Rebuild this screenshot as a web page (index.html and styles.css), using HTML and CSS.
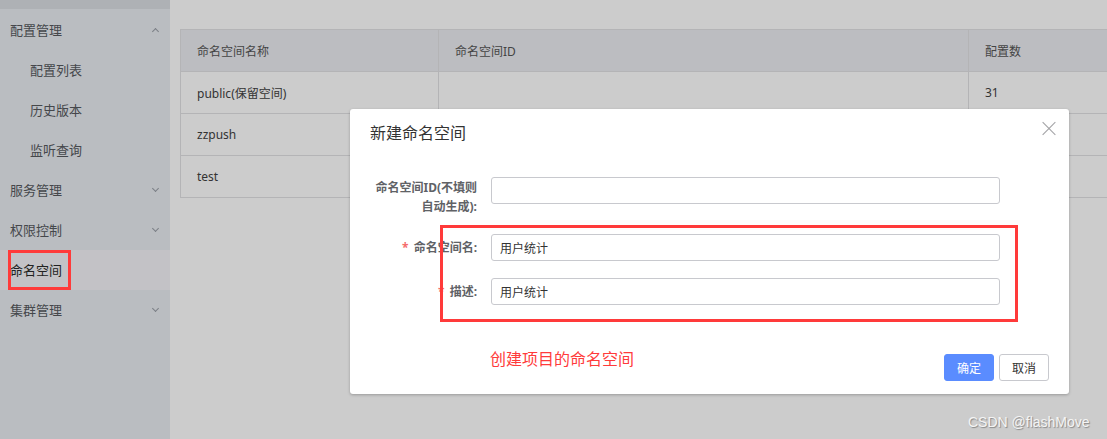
FILE: index.html
```html
<!DOCTYPE html>
<html lang="zh-CN">
<head>
  <meta charset="UTF-8" />
  <title>命名空间</title>
  <link rel="stylesheet" href="styles.css">
</head>
<body>

<div class="layout">
  <aside class="sidebar">
    <div class="sidebar-top"></div>
    <ul class="menu">
      <li class="menu-item">配置管理<span class="arrow up"></span></li>
      <li class="menu-item sub">配置列表</li>
      <li class="menu-item sub">历史版本</li>
      <li class="menu-item sub">监听查询</li>
      <li class="menu-item">服务管理<span class="arrow"></span></li>
      <li class="menu-item">权限控制<span class="arrow"></span></li>
      <li class="menu-item active">命名空间</li>
      <li class="menu-item">集群管理<span class="arrow"></span></li>
    </ul>
    <div class="mark mark-menu"></div>
  </aside>

  <main class="content">
    <table class="grid">
      <thead>
        <tr>
          <th class="col-name">命名空间名称</th>
          <th class="col-id">命名空间ID</th>
          <th class="col-count">配置数</th>
        </tr>
      </thead>
      <tbody>
        <tr><td>public(保留空间)</td><td></td><td>31</td></tr>
        <tr><td>zzpush</td><td></td><td></td></tr>
        <tr><td>test</td><td></td><td></td></tr>
      </tbody>
    </table>
  </main>
</div>

<div class="dialog">
  <div class="dialog-header">
    <span class="dialog-title">新建命名空间</span>
    <span class="dialog-close"></span>
  </div>
  <div class="dialog-body">
    <div class="form-row tall">
      <label class="form-label">命名空间ID(不填则<br>自动生成):</label>
      <input class="form-input" type="text" />
    </div>
    <div class="form-row">
      <label class="form-label"><span class="req">*</span>命名空间名:</label>
      <input class="form-input" type="text" value="用户统计" />
    </div>
    <div class="form-row">
      <label class="form-label"><span class="req">*</span>描述:</label>
      <input class="form-input" type="text" value="用户统计" />
    </div>
  </div>
  <div class="dialog-footer">
    <span class="note">创建项目的命名空间</span>
    <button class="btn btn-primary">确定</button>
    <button class="btn">取消</button>
  </div>
</div>

<div class="mark mark-form"></div>

<div class="watermark">CSDN @flashMove</div>

</body>
</html>
```

FILE: styles.css
```css
* {
  box-sizing: border-box;
}

body {
  margin: 0;
  font-family: "Noto Sans", "Noto Sans CJK SC", sans-serif;
  background: #cccccc;
  color: #333;
  overflow: hidden;
  height: 439px;
}

.layout {
  display: flex;
  height: 439px;
}

.sidebar {
  width: 170px;
  flex-shrink: 0;
  background: #babdc1;
  position: relative;
}

.sidebar-top {
  height: 9px;
  background: #aeb1b5;
}

.menu {
  list-style: none;
  margin: 0;
  padding: 1px 0 0;
}

.menu-item {
  height: 40px;
  line-height: 40px;
  padding-left: 10px;
  font-size: 13px;
  color: #45474b;
  position: relative;
}

.menu-item.sub {
  padding-left: 30px;
}

.menu-item.active {
  background: #c3c2c6;
  color: #222;
}

.arrow {
  position: absolute;
  right: 12px;
  top: 16px;
  width: 5px;
  height: 5px;
  border-right: 1px solid #7b7f86;
  border-bottom: 1px solid #7b7f86;
  transform: rotate(45deg);
}

.arrow.up {
  top: 19px;
  transform: rotate(-135deg);
}

.content {
  flex: 1;
  padding: 29px 0 0 10px;
  overflow: hidden;
}

.grid {
  border-collapse: collapse;
  width: 1000px;
  font-size: 12px;
  color: #333;
}

.grid th,
.grid td {
  height: 42px;
  padding: 0 16px;
  text-align: left;
  font-weight: normal;
  border: 1px solid #b4b4b6;
}

.grid th {
  background: #bcbdc1;
  color: #444;
}

.col-name {
  width: 258px;
}

.col-id {
  width: 530px;
}

.dialog {
  position: absolute;
  left: 350px;
  top: 109px;
  width: 719px;
  height: 285px;
  background: #fff;
  border-radius: 3px;
  box-shadow: 0 1px 3px rgba(0, 0, 0, 0.25);
}

.dialog-header {
  height: 48px;
  padding: 13px 20px 0;
  position: relative;
}

.dialog-title {
  font-size: 16px;
  line-height: 22px;
  color: #333;
}

.dialog-close {
  position: absolute;
  right: 13px;
  top: 13px;
  width: 14px;
  height: 14px;
}

.dialog-close::before,
.dialog-close::after {
  content: "";
  position: absolute;
  left: -2px;
  top: 6px;
  width: 18px;
  height: 1px;
  background: #a0a0a4;
  transform: rotate(45deg);
}

.dialog-close::after {
  transform: rotate(-45deg);
}

.dialog-body {
  padding-top: 20px;
}

.form-row {
  display: flex;
  align-items: center;
  margin-bottom: 17px;
}

.form-row.tall {
  align-items: flex-start;
  height: 40px;
}

.form-label {
  width: 141px;
  padding-right: 14px;
  text-align: right;
  font-size: 12px;
  font-weight: bold;
  color: #606266;
  line-height: 19px;
}

.tall .form-label {
  padding-top: 1px;
}

.req {
  color: #f56c6c;
  margin-right: 5px;
}

.form-input {
  width: 509px;
  height: 27px;
  border: 1px solid #c8c9ce;
  border-radius: 3px;
  padding: 0 8px;
  font-family: inherit;
  font-size: 12px;
  color: #333;
  outline: none;
}

.dialog-footer {
  display: flex;
  align-items: center;
  padding: 32px 20px 0 140px;
}

.note {
  flex: 1;
  font-size: 16px;
  color: #ff3b3b;
  margin-top: -20px;
}

.btn {
  width: 50px;
  height: 27px;
  margin-left: 5px;
  border: 1px solid #c8c9ce;
  border-radius: 3px;
  background: #fff;
  font-family: inherit;
  font-size: 12px;
  color: #333;
  padding: 0;
}

.btn-primary {
  background: #5a8cff;
  border-color: #5a8cff;
  color: #fff;
}

.mark {
  position: absolute;
  border: 3px solid #ff3a3a;
}

.mark-menu {
  left: 8px;
  top: 250px;
  width: 63px;
  height: 40px;
}

.mark-form {
  left: 440px;
  top: 225px;
  width: 578px;
  height: 97px;
}

.watermark {
  position: absolute;
  left: 968px;
  top: 414px;
  font-family: "Liberation Sans", sans-serif;
  font-size: 14px;
  color: #f4f4f4;
  text-shadow: 1px 1px 1px #888;
}
```
